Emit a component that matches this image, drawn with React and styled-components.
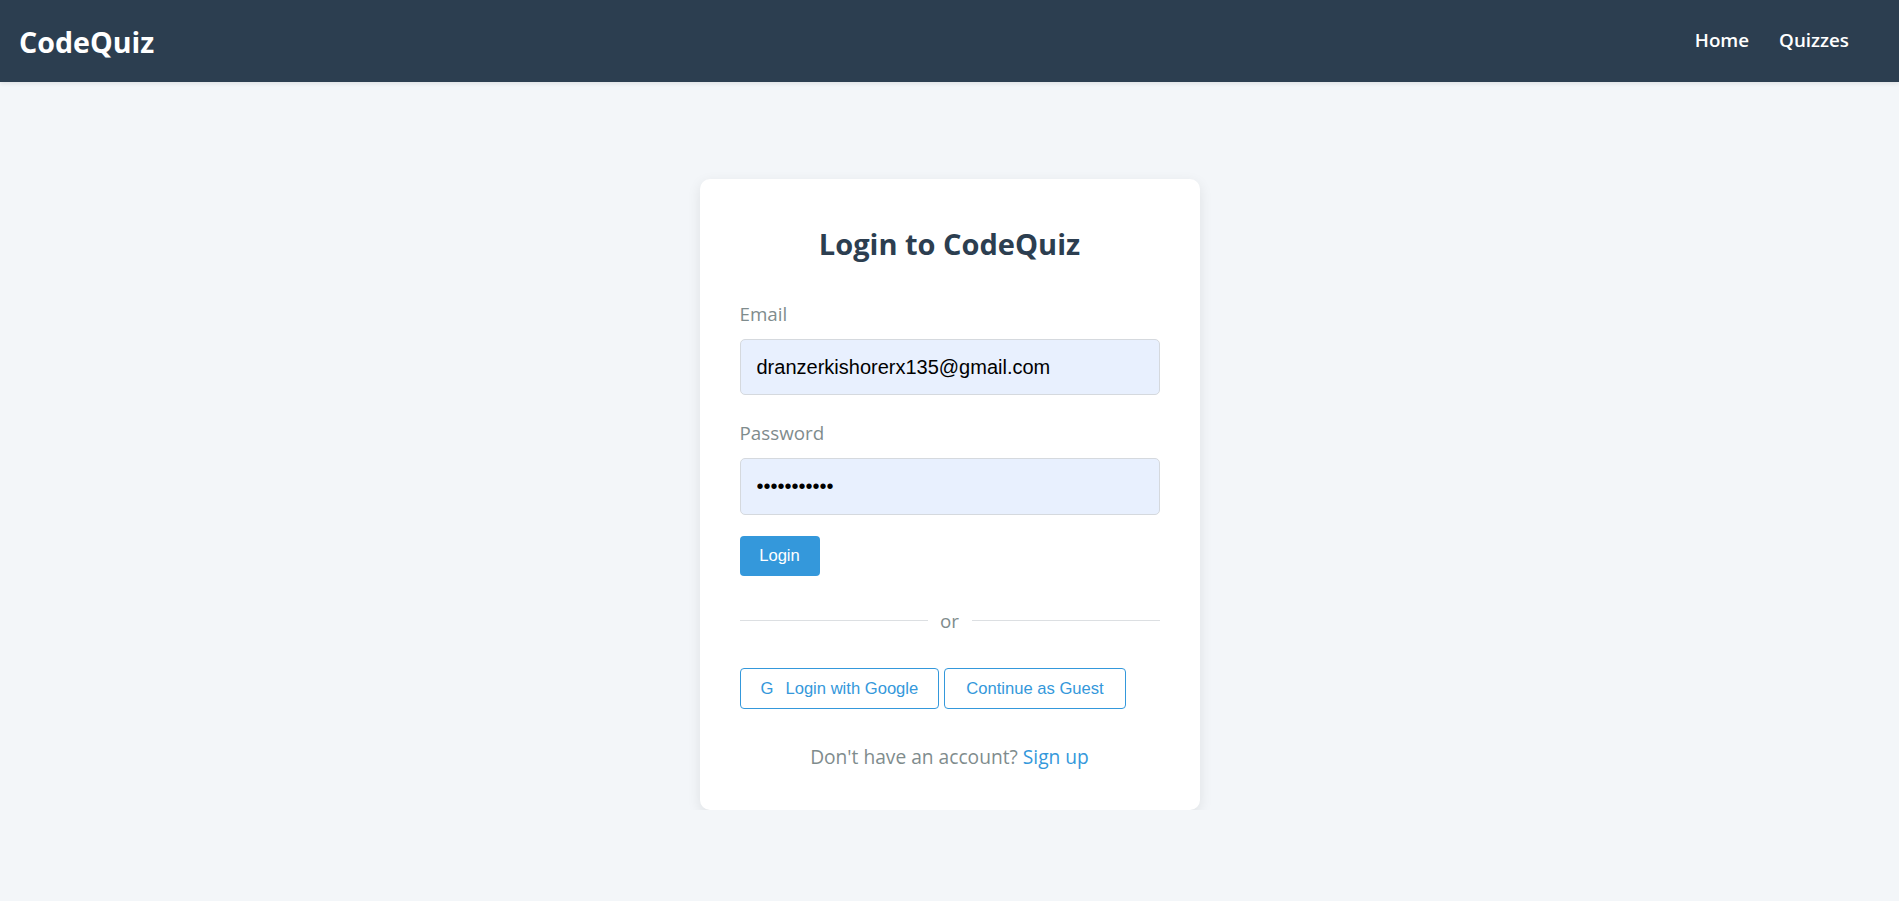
import React, { useState } from 'react';
import styled, { createGlobalStyle } from 'styled-components';

const GlobalStyle = createGlobalStyle`
  * { box-sizing: border-box; }
  body {
    margin: 0;
    background-color: #f3f6f9;
    font-family: "Open Sans", "Noto Sans", sans-serif;
  }
`

const Navbar = styled.header`
  height: 82px;
  background-color: #2c3e50;
  display: flex;
  align-items: center;
  justify-content: space-between;
  padding: 0 50px 0 19px;
  box-shadow: 0 2px 4px rgba(0, 0, 0, 0.08);
`

const Logo = styled.div`
  color: #fff;
  font-size: 28.6px;
  font-weight: 700;
`

const NavLinks = styled.nav`
  display: flex;
  gap: 30px;
  margin-top: -2px;
`

const NavLink = styled.a`
  color: #fff;
  font-size: 18.8px;
  font-weight: 600;
  text-decoration: none;
`

const Card = styled.div`
  width: 500px;
  margin: 97px auto 0;
  background: #fff;
  border-radius: 10px;
  box-shadow: 0 4px 14px rgba(0, 0, 0, 0.09);
  padding: 40px 40px 41px;
  display: flex;
  flex-direction: column;
`

const Title = styled.h2`
  margin: 0 0 33px;
  line-height: 50px;
  text-align: center;
  color: #2c3e50;
  font-size: 29px;
  font-weight: 700;
`

const Field = styled.div`
  display: flex;
  flex-direction: column;
  margin-bottom: ${(p) => p.gap || 0}px;
`

const Label = styled.label`
  color: #7f8c8d;
  font-size: 18.8px;
  line-height: 24px;
  margin-bottom: 13px;
`

const Input = styled.input`
  height: ${(p) => p.h || 56}px;
  width: 100%;
  padding: 0 16px;
  background: #e8f0fe;
  border: 1px solid #d5d9de;
  border-radius: 5px;
  font-family: "Liberation Sans", Arial, sans-serif;
  font-size: 20px;
  color: #000;
  outline: none;
`

const PrimaryButton = styled.button`
  align-self: flex-start;
  margin-top: 21px;
  height: 40px;
  width: 80px;
  border: none;
  border-radius: 4px;
  background: #3498db;
  color: #fff;
  font-family: "Liberation Sans", Arial, sans-serif;
  font-size: 16.6px;
  cursor: pointer;
`

const Divider = styled.div`
  margin-top: 31px;
  display: flex;
  align-items: center;
  gap: 12px;
  color: #7f8c8d;
  font-size: 18.8px;
  line-height: 24px;
  &::before, &::after {
    content: '';
    flex: 1;
    height: 1px;
    background: #dcdfe2;
  }
  span { padding: 2px 0 0; width: 20px; text-align: center; }
`

const ButtonRow = styled.div`
  margin-top: 35px;
  display: flex;
  gap: 5px;
`

const OutlineButton = styled.button`
  height: 41px;
  padding: 0 ${(p) => p.pad || 20}px;
  background: #fff;
  border: 1px solid #3498db;
  border-radius: 4px;
  color: #3498db;
  font-family: "Liberation Sans", Arial, sans-serif;
  font-size: 16.6px;
  display: flex;
  align-items: center;
  gap: 12px;
  cursor: pointer;
`

const Footer = styled.p`
  margin: 36px 0 0;
  text-align: center;
  color: #7f8c8d;
  font-size: 19.2px;
  line-height: 24px;
  a {
    color: #3498db;
    text-decoration: none;
  }
`

const App = () => {
  const [email, setEmail] = useState('dranzerkishorerx135@gmail.com');
  const [password, setPassword] = useState('supersecret');

  return (
    <>
      <GlobalStyle />
      <Navbar>
        <Logo>CodeQuiz</Logo>
        <NavLinks>
          <NavLink href="#">Home</NavLink>
          <NavLink href="#">Quizzes</NavLink>
        </NavLinks>
      </Navbar>
      <Card>
        <Title>Login to CodeQuiz</Title>
        <Field gap={26}>
          <Label>Email</Label>
          <Input type="email" value={email} onChange={(e) => setEmail(e.target.value)} />
        </Field>
        <Field>
          <Label>Password</Label>
          <Input type="password" h={57} value={password} onChange={(e) => setPassword(e.target.value)} />
        </Field>
        <PrimaryButton>Login</PrimaryButton>
        <Divider><span>or</span></Divider>
        <ButtonRow>
          <OutlineButton>
            <span>G</span>
            <span>Login with Google</span>
          </OutlineButton>
          <OutlineButton pad={21}>Continue as Guest</OutlineButton>
        </ButtonRow>
        <Footer>
          Don't have an account? <a href="#">Sign up</a>
        </Footer>
      </Card>
    </>
  );
};

export default App;
